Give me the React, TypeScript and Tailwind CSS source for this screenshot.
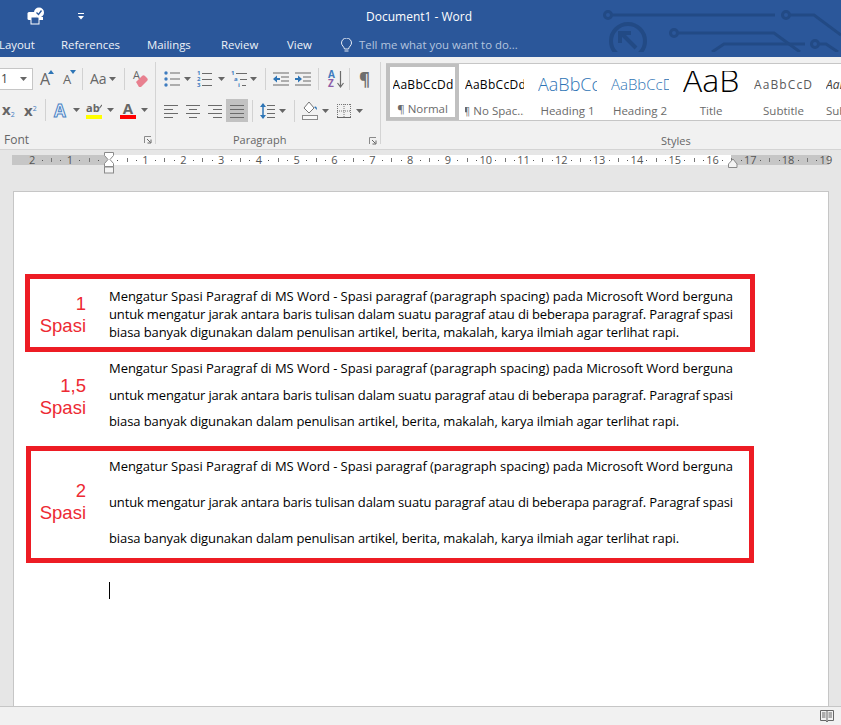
import React from "react";

const G = "#6b6b6b";
const B = "#3f7cbf";

function Sep() {
  return <div className="w-px h-[22px] bg-[#d2d2d2] shrink-0" />;
}
function Arrow({ className = "" }: { className?: string }) {
  return (
    <svg width="7" height="4" viewBox="0 0 7 4" className={"shrink-0 " + className}>
      <path d="M0 0h7L3.5 4z" fill="#666" />
    </svg>
  );
}
function Lines({ className = "", w, rows }: { className?: string; w: number; rows: [number, number, number][] }) {
  return (
    <svg width={w} height="16" viewBox={`0 0 ${w} 16`} className={"shrink-0 " + className}>
      {rows.map(([x1, x2, y], i) => (
        <rect key={i} x={x1} y={y} width={x2 - x1} height="1" fill={G} />
      ))}
    </svg>
  );
}
function Launcher() {
  return (
    <svg width="8" height="8" viewBox="0 0 8 8" className="shrink-0">
      <path d="M.5 7V.5H7" fill="none" stroke="#8a8a8a" />
      <path d="M3 3l3.5 3.5M7 3.5V7H3.5" fill="none" stroke="#666" />
    </svg>
  );
}

function Bullets({ className = "" }: { className?: string }) {
  return (
    <svg width="16" height="16" viewBox="0 0 16 16" className={"shrink-0 " + className}>
      {[2, 8, 14].map((y) => (
        <g key={y}>
          <circle cx="2" cy={y} r="1.7" fill={B} />
          <rect x="6" y={y - 0.5} width="10" height="1" fill={G} />
        </g>
      ))}
    </svg>
  );
}
function Numbering({ className = "" }: { className?: string }) {
  return (
    <div className={"shrink-0 w-[15px] h-[17px] relative flex flex-col justify-between text-[6px] leading-[5px] font-bold text-[#3f7cbf] " + className}>
      {["1", "2", "3"].map((n) => (
        <div key={n} className="flex items-center gap-[2px]">
          <span>{n}</span>
          <div className="flex-1 h-px bg-[#6b6b6b]" />
        </div>
      ))}
    </div>
  );
}
function Multi({ className = "" }: { className?: string }) {
  return (
    <div className={"shrink-0 w-[16px] h-[17px] flex flex-col justify-between text-[6px] leading-[5px] font-bold text-[#3f7cbf] " + className}>
      <div className="flex items-center gap-[2px]"><span>1</span><div className="flex-1 h-px bg-[#6b6b6b]" /></div>
      <div className="flex items-center gap-[2px] pl-[3px]"><span>a</span><div className="flex-1 h-px bg-[#6b6b6b]" /></div>
      <div className="flex items-center gap-[2px] pl-[7px]"><span>i</span><div className="w-[4px] h-px bg-[#6b6b6b]" /></div>
    </div>
  );
}
function Indent({ className = "", flip = false }: { className?: string; flip?: boolean }) {
  return (
    <svg width="16" height="14" viewBox="0 0 16 14" className={"shrink-0 " + className}>
      <rect x="0" y="0.5" width="16" height="1" fill={G} />
      <rect x="8" y="4.5" width="8" height="1" fill={G} />
      <rect x="8" y="8.5" width="8" height="1" fill={G} />
      <rect x="0" y="12.5" width="16" height="1" fill={G} />
      {flip ? <path d="M0 6h3V3.5L7 7l-4 3.5V8H0z" fill="#2e75b6" /> : <path d="M7 6H4V3.5L0 7l4 3.5V8h3z" fill="#2e75b6" />}
    </svg>
  );
}
function Sort({ className = "" }: { className?: string }) {
  return (
    <div className={"shrink-0 w-[16px] h-[18px] flex items-center " + className}>
      <div className="flex flex-col text-[10px] leading-[9px] font-bold w-[9px]">
        <span className="text-[#3f7cbf]">A</span>
        <span className="text-[#8d5ea8]">Z</span>
      </div>
      <svg width="7" height="17" viewBox="0 0 7 17">
        <path d="M3.5 0v16M.5 12l3 4 3-4" fill="none" stroke={G} strokeWidth="1.2" />
      </svg>
    </div>
  );
}
function LineSpacing({ className = "" }: { className?: string }) {
  return (
    <svg width="15" height="18" viewBox="0 0 15 18" className={"shrink-0 " + className}>
      <path d="M3 2v14" stroke="#2e75b6" strokeWidth="1.5" />
      <path d="M0 5l3-4 3 4zM0 13l3 4 3-4z" fill="#2e75b6" />
      {[3, 7, 11, 15].map((y) => (
        <rect key={y} x="7" y={y} width="8" height="1" fill={G} />
      ))}
    </svg>
  );
}
function Shading({ className = "" }: { className?: string }) {
  return (
    <svg width="16" height="20" viewBox="0 0 16 20" className={"shrink-0 " + className}>
      <path d="M7 1l5 6-5 5-5-5z" fill="#fff" stroke="#777" />
      <path d="M12 6c2-1.500 3 0 3 3-1-1-2-2-3-3z" fill="#2e75b6" />
      <rect x="0.500" y="14.500" width="15" height="4" fill="#f8f8f8" stroke="#8a8a8a" />
    </svg>
  );
}
function BordersIcon({ className = "" }: { className?: string }) {
  return (
    <svg width="14" height="14" viewBox="0 0 14 14" className={"shrink-0 " + className}>
      <path d="M.5 0v14M13.5 0v14M7 0v14M0 .5h14M0 7h14" stroke="#777" strokeDasharray="1 1" fill="none" />
      <rect x="0" y="13" width="14" height="1" fill="#666" />
    </svg>
  );
}
function Eraser({ className = "" }: { className?: string }) {
  return (
    <div className={"shrink-0 relative w-[16px] h-[20px] " + className}>
      <span className="text-[11px] leading-[12px] text-[#666] block">A</span>
      <svg width="14" height="14" viewBox="0 0 14 14" className="absolute left-[2px] top-[5px]">
        <path d="M1 8l6-6c1-1 2-1 3 0l2 2c1 1 1 2 0 3l-6 6H4z" fill="#e8808f" />
      </svg>
    </div>
  );
}
function Book() {
  return (
    <svg width="14" height="13" viewBox="0 0 14 13" className="shrink-0">
      <path d="M.5.5h13v10H8L7 12l-1-1.500H.5z" fill="none" stroke="#666" />
      <path d="M7 .5v11M2 3h3.500M2 5h3.500M2 7h3.500M8.500 3H12M8.500 5H12M8.500 7H12" stroke="#666" fill="none" />
    </svg>
  );
}

function Ruler() {
  const step = 37.8;
  const zero = 107.7;
  const items: React.ReactNode[] = [];
  for (let c = -2; c <= 19; c++) {
    const x = zero + c * step;
    if (c !== 0) {
      items.push(
        <text key={"n" + c} x={x} y="13" textAnchor="middle" fontSize="11" fill="#555" fontFamily="'Open Sans', sans-serif">
          {Math.abs(c)}
        </text>
      );
    }
    if (c < 19) {
      [0.25, 0.75].forEach((f) => items.push(<rect key={`d${c}${f}`} x={Math.round(x + step * f)} y="9" width="1" height="1" fill="#555" />));
      items.push(<rect key={"t" + c} x={Math.round(x + step * 0.5)} y="7" width="1" height="4" fill="#777" />);
    }
  }
  return (
    <svg width="841" height="24" viewBox="0 0 841 24" className="block">
      <rect x="12" y="4" width="97" height="10" fill="#c6c6c6" />
      <rect x="109" y="4" width="622" height="10" fill="#fff" />
      <rect x="731" y="4" width="98" height="10" fill="#c6c6c6" />
      <g>{items}</g>
      <path d="M104.500 1.500h9v3l-3.500 4 3.500 4v3h-9v-3l3.500-4-3.500-4z" fill="#fff" stroke="#8a8a8a" />
      <rect x="104.500" y="16" width="9" height="6" fill="#f4f4f4" stroke="#8a8a8a" />
      <path d="M728.500 16.500v-3.500L733 8l4 5v3.500z" fill="#f4f4f4" stroke="#8a8a8a" />
    </svg>
  );
}

const L1 = "Mengatur Spasi Paragraf di MS Word - Spasi paragraf (paragraph spacing) pada Microsoft Word berguna";
const L2 = "untuk mengatur jarak antara baris tulisan dalam suatu paragraf atau di beberapa paragraf. Paragraf spasi";
const L3 = "biasa banyak digunakan dalam penulisan artikel, berita, makalah, karya ilmiah agar terlihat rapi.";

function Para({ className }: { className: string }) {
  return (
    <div className={"whitespace-nowrap text-[13px] text-black [font-family:'Open_Sans',sans-serif] " + className}>
      <div className="tracking-[-0.05px]">{L1}</div>
      <div className="tracking-[-0.15px]">{L2}</div>
      <div className="tracking-[-0.1px]">{L3}</div>
    </div>
  );
}
function Label({ a, className }: { a: string; className: string }) {
  return (
    <div className={"text-right text-[18.5px] leading-[21.500px] text-[#ed2a33] [font-family:'Liberation_Sans',sans-serif] " + className}>
      <div>{a}</div>
      <div>Spasi</div>
    </div>
  );
}

function Style({ name, preview, cls, box, labelCls = "" }: { name: string; preview: string; cls: string; box: string; labelCls?: string }) {
  return (
    <div className={"shrink-0 flex flex-col items-center overflow-hidden " + box}>
      <div className={"h-[39px] pt-[2px] w-full flex items-center overflow-hidden whitespace-nowrap " + cls}>{preview}</div>
      <div className={"text-[11.5px] leading-[16px] text-[#6a6a6a] whitespace-nowrap " + labelCls}>{name}</div>
    </div>
  );
}

export default function App() {
  return (
    <div className="w-[841px] h-[725px] overflow-hidden flex flex-col bg-[#e6e6e6] [font-family:'Open_Sans',sans-serif]">
      <header className="relative h-[57px] shrink-0 bg-[#2b579a] text-white overflow-hidden">
        <svg width="241" height="52" viewBox="0 0 241 52" className="absolute left-[600px] top-0" fill="none" stroke="#224a85" strokeWidth="3">
          <circle cx="8" cy="15" r="3.500" />
          <path d="M11 15h164" />
          <circle cx="186" cy="15" r="3.500" />
          <path d="M190 15h24l27 20" />
          <circle cx="28" cy="41" r="17" strokeWidth="4" />
          <path d="M36 48L22 34M20 43v-10h11" strokeWidth="4" />
          <circle cx="74" cy="33" r="3.500" />
          <path d="M78 33h96l26 19" />
          <path d="M112 52l12-8h81" />
          <circle cx="215" cy="44" r="3.500" />
          <path d="M219 44h7l12 8" />
        </svg>
        <div className="relative h-[33px] flex items-center">
          <svg width="18" height="18" viewBox="0 0 18 18" className="ml-[27px] shrink-0 mb-[1px]">
            <rect x="0.500" y="5" width="9" height="8" rx="1.500" fill="#fff" />
            <rect x="4" y="10" width="8" height="7" fill="#2b579a" stroke="#fff" />
            <circle cx="12" cy="5.500" r="5" fill="#fff" />
            <path d="M9.500 5.500l2 2 3-4" fill="none" stroke="#2b579a" strokeWidth="1.300" />
            <rect x="12" y="10" width="4" height="3" fill="#fff" />
          </svg>
          <svg width="6" height="7" viewBox="0 0 6 7" className="ml-[33px] shrink-0">
            <rect width="6" height="1" fill="#fff" />
            <path d="M0 3h6L3 6.500z" fill="#fff" />
          </svg>
          <div className="ml-[282px] text-[12px] leading-none whitespace-nowrap">Document1 - Word</div>
        </div>
        <nav className="relative h-[24px] flex items-center text-[11.4px] leading-none text-[#eef2f8] whitespace-nowrap">
          <span className="-ml-[1px] w-[33px]">Layout</span>
          <span className="ml-[29px] w-[57px]">References</span>
          <span className="ml-[29px] w-[45px]">Mailings</span>
          <span className="ml-[29px] w-[37px]">Review</span>
          <span className="ml-[29px] w-[25px]">View</span>
          <svg width="11" height="15" viewBox="0 0 11 15" className="ml-[29px] shrink-0" fill="none" stroke="#e6ecf5">
            <path d="M3.500 11C3 8.500.5 7.500.5 5a5 5 0 0110 0c0 2.500-2.500 3.500-3 6z" />
            <path d="M3.500 13h4" />
          </svg>
          <span className="ml-[7px] text-[#b4c5df]">Tell me what you want to do...</span>
        </nav>
      </header>

      <section className="h-[93px] shrink-0 bg-[#f1f1f1] border-b border-[#d4d4d4] flex text-[#666] overflow-hidden">
        <div className="w-[156px] shrink-0 flex flex-col">
          <div className="mt-[11px] h-[22px] flex items-center">
            <div className="w-[33px] h-[22px] shrink-0 bg-white border border-l-0 border-[#c6c6c6] flex items-center justify-between pr-[5px] text-[12px] text-[#444]">
              <span className="pl-[1px]">1</span>
              <Arrow />
            </div>
            <div className="ml-[7px] w-[14px] shrink-0 relative text-[16px] leading-[20px] text-[#666]">
              A
              <svg width="6" height="4" viewBox="0 0 6 4" className="absolute left-[8px] top-[1px]"><path d="M0 4l3-4 3 4z" fill="#2e75b6" /></svg>
            </div>
            <div className="ml-[9px] w-[13px] shrink-0 relative text-[13px] leading-[20px] text-[#666]">
              A
              <svg width="6" height="4" viewBox="0 0 6 4" className="absolute left-[7px] top-[1px]"><path d="M0 0h6L3 4z" fill="#2e75b6" /></svg>
            </div>
            <div className="ml-[6px]"><Sep /></div>
            <div className="ml-[7px] w-[16px] shrink-0 text-[14px] leading-none">Aa</div>
            <Arrow className="ml-[3px]" />
            <div className="ml-[8px]"><Sep /></div>
            <Eraser className="ml-[8px]" />
          </div>
          <div className="mt-[9px] h-[23px] flex items-center">
            <div className="ml-[2px] w-[13px] shrink-0 text-[15px] leading-none font-bold text-[#666] whitespace-nowrap">x<span className="text-[7px] text-[#3f7cbf] font-normal align-[-2px]">2</span></div>
            <div className="ml-[9px] w-[12px] shrink-0 text-[15px] leading-none font-bold text-[#666] whitespace-nowrap">x<span className="text-[7px] text-[#3f7cbf] font-normal align-[5px]">2</span></div>
            <div className="ml-[9px]"><Sep /></div>
            <div className="ml-[8px] w-[14px] shrink-0 text-[17px] leading-none font-bold text-[#eaf2fb] [-webkit-text-stroke:1px_#4a82c4]">A</div>
            <Arrow className="ml-[5px]" />
            <div className="ml-[6px] w-[16px] shrink-0 flex flex-col items-stretch">
              <div className="h-[12px] flex items-center text-[11px] leading-none font-bold text-[#666]">
                ab
                <svg width="8" height="10" viewBox="0 0 8 10" className="-ml-[1px]"><path d="M7 0L1 8" stroke="#666" strokeWidth="2.500" /></svg>
              </div>
              <div className="h-[4px] mt-[2px] bg-[#ffff00]" />
            </div>
            <Arrow className="ml-[5px]" />
            <div className="ml-[6px] w-[16px] shrink-0 flex flex-col items-center">
              <div className="h-[13px] text-[15px] leading-[14px] font-bold text-[#666]">A</div>
              <div className="h-[4px] w-full mt-[1px] bg-[#ff0000]" />
            </div>
            <Arrow className="ml-[5px]" />
          </div>
          <div className="mt-[10px] h-[18px] flex items-center justify-between pl-[4px] pr-[4px] text-[12px] text-[#666]">
            <span>Font</span>
            <Launcher />
          </div>
        </div>

        <div className="my-[5px] w-px bg-[#d4d4d4] shrink-0 -ml-px" />

        <div className="w-[225px] shrink-0 flex flex-col">
          <div className="mt-[11px] h-[22px] flex items-center">
            <Bullets className="ml-[8px]" />
            <Arrow className="ml-[4px]" />
            <Numbering className="ml-[6px]" />
            <Arrow className="ml-[6px]" />
            <Multi className="ml-[6px]" />
            <Arrow className="ml-[3px]" />
            <div className="ml-[8px]"><Sep /></div>
            <Indent className="ml-[7px]" />
            <Indent className="ml-[6px]" flip />
            <div className="ml-[7px]"><Sep /></div>
            <Sort className="ml-[9px]" />
            <div className="ml-[5px]"><Sep /></div>
            <div className="ml-[9px] w-[11px] text-[17px] font-bold leading-none text-[#6e6e6e]">¶</div>
          </div>
          <div className="mt-[9px] h-[23px] flex items-center">
            <Lines className="ml-[8px]" w={14} rows={[[0, 14, 2], [0, 9, 6], [0, 14, 10], [0, 9, 14]]} />
            <Lines className="ml-[8px]" w={14} rows={[[0, 14, 2], [3, 11, 6], [0, 14, 10], [3, 11, 14]]} />
            <Lines className="ml-[8px]" w={14} rows={[[0, 14, 2], [5, 14, 6], [0, 14, 10], [5, 14, 14]]} />
            <div className="ml-[4px] w-[22px] h-[23px] shrink-0 bg-[#c2c2c2] flex items-center justify-center">
              <Lines w={14} rows={[[0, 14, 2], [0, 14, 6], [0, 14, 10], [0, 14, 14]]} />
            </div>
            <div className="ml-[4px]"><Sep /></div>
            <LineSpacing className="ml-[7px]" />
            <Arrow className="ml-[4px]" />
            <div className="ml-[8px]"><Sep /></div>
            <Shading className="ml-[7px]" />
            <Arrow className="ml-[4px]" />
            <BordersIcon className="ml-[8px]" />
            <Arrow className="ml-[5px]" />
          </div>
          <div className="mt-[10px] h-[18px] flex items-center pr-[4px] text-[11px] text-[#666]">
            <span className="ml-[77px]">Paragraph</span>
            <div className="ml-auto"><Launcher /></div>
          </div>
        </div>

        <div className="my-[5px] w-px bg-[#d4d4d4] shrink-0 -ml-px" />

        <div className="flex-1 flex flex-col min-w-0">
          <div className="mt-[6px] ml-[5px] h-[60px] bg-white border-y border-[#c6c6c6] flex items-stretch overflow-hidden">
            <div className="w-[73px] shrink-0 border-[4px] border-[#c0c0c0] -my-px flex flex-col items-center overflow-hidden">
              <div className="h-[35px] pt-[2px] w-[60px] flex items-center overflow-hidden whitespace-nowrap text-[12px] tracking-[0.3px] text-black">AaBbCcDdEe</div>
              <div className="text-[11.5px] leading-[16px] text-[#6a6a6a] whitespace-nowrap">¶ Normal</div>
            </div>
            <Style name="¶ No Spac..." preview="AaBbCcDdEe" cls="text-[12px] tracking-[0.3px] text-black" box="w-[59px] ml-[6px]" />
            <Style name="Heading 1" preview="AaBbCcD" cls="text-[18px] text-[#2e74b5] font-light" box="w-[59px] ml-[14px]" />
            <Style name="Heading 2" preview="AaBbCcDd" cls="text-[15px] text-[#2e74b5] font-light" box="w-[58px] ml-[14px]" />
            <div className="w-[56px] ml-[14px] shrink-0 flex flex-col items-center overflow-hidden">
              <div className="h-[39px] pt-[7px] w-full">
                <div className="h-[23px] overflow-hidden text-[32px] leading-[18px] font-light text-black whitespace-nowrap">AaB</div>
              </div>
              <div className="text-[11.5px] leading-[16px] text-[#6a6a6a] whitespace-nowrap">Title</div>
            </div>
            <Style name="Subtitle" preview="AaBbCcDd" cls="text-[12px] text-[#5a5a5a] tracking-[1.1px]" box="w-[59px] ml-[15px]" />
            <Style name="Subtle" preview="AaBbCcDd" cls="text-[12px] italic text-[#404040]" box="w-[30px] ml-[13px]" labelCls="self-start" />
          </div>
          <div className="mt-[12px] h-[16px] flex items-center text-[11px] text-[#666] pl-[280px]">Styles</div>
        </div>
      </section>

      <div className="h-[24px] shrink-0 mt-[1px]"><Ruler /></div>

      <main className="flex-1 min-h-0 overflow-hidden mt-[16px] ml-[13px]">
        <div className="w-[816px] h-[516px] bg-white border border-[#c6c6c6] pt-[82px]">
          <div className="ml-[11px] w-[730px] h-[78px] border-[5px] border-[#ed1c24] flex">
            <Label a="1" className="w-[56px] shrink-0 pt-[14px]" />
            <Para className="ml-[23px] leading-[18px] pt-[8px]" />
          </div>
          <div className="ml-[16px] h-[94px] flex">
            <Label a="1,5" className="w-[56px] shrink-0 pt-[23px]" />
            <Para className="ml-[23px] leading-[26.500px] pt-[3px]" />
          </div>
          <div className="ml-[12px] w-[728px] h-[117px] border-[5px] border-[#ed1c24] flex">
            <Label a="2" className="w-[55px] shrink-0 pt-[29px]" />
            <Para className="ml-[23px] leading-[36px] -mt-[3px]" />
          </div>
          <div className="ml-[95px] mt-[19px] w-px h-[17px] bg-black" />
        </div>
      </main>

      <footer className="h-[19px] shrink-0 bg-[#f1f1f1] border-t border-[#c6c6c6] flex items-center justify-end pr-[7px]">
        <Book />
      </footer>
    </div>
  );
}
